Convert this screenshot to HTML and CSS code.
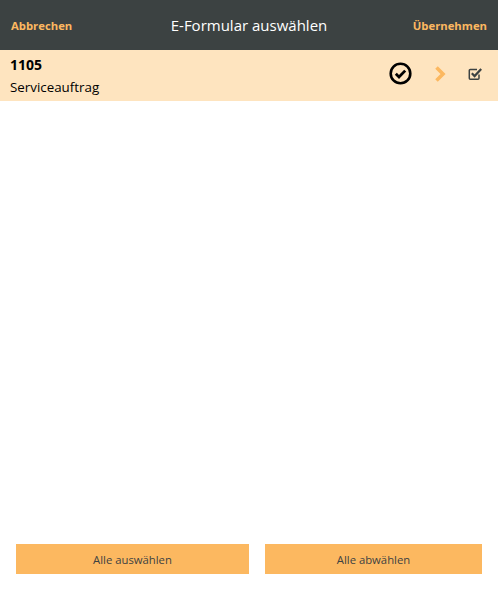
FILE: index.html
```html
<!DOCTYPE html>
<html lang="de">
<head>
  <meta charset="UTF-8">
  <meta name="viewport" content="width=device-width, initial-scale=1.0">
  <title>E-Formular auswählen</title>
  <link rel="stylesheet" href="styles.css">
</head>
<body>
  <div class="app">
    <!-- Header -->
    <header class="topbar">
      <a class="topbar-action">Abbrechen</a>
      <h1 class="topbar-title">E-Formular auswählen</h1>
      <a class="topbar-action topbar-action-right">Übernehmen</a>
    </header>
    <!-- Liste -->
    <main class="list">
      <div class="row">
        <div class="row-text">
          <div class="row-id">1105</div>
          <div class="row-name">Serviceauftrag</div>
        </div>
        <svg class="icon-status" width="23" height="23" viewBox="0 0 23 23">
          <circle cx="11.500" cy="11.500" r="9.800" fill="none" stroke="#000" stroke-width="2.600"/>
          <path d="M6.800 11.800l3.200 3.200 6.200-6.400" fill="none" stroke="#000" stroke-width="2.800"/>
        </svg>
        <svg class="icon-chevron" width="12" height="16" viewBox="0 0 12 16">
          <path d="M2.5 1.5L9 8l-6.500 6.500" fill="none" stroke="#fcb860" stroke-width="3.600"/>
        </svg>
        <svg class="icon-check" width="15" height="14" viewBox="0 0 15 14">
          <path d="M11 7.500v3.700a1 1 0 0 1-1 1H2.300a1 1 0 0 1-1-1V3.500a1 1 0 0 1 1-1H9" fill="none" stroke="#3c4242" stroke-width="1.500"/>
          <path d="M3.800 6.300l2.800 2.800 6.600-7" fill="none" stroke="#3c4242" stroke-width="2.200"/>
        </svg>
      </div>
    </main>
    <!-- Buttons unten -->
    <footer class="actions">
      <button class="btn btn-select">Alle auswählen</button>
      <button class="btn btn-deselect">Alle abwählen</button>
    </footer>
  </div>
</body>
</html>
```

FILE: styles.css
```css
* {
  box-sizing: border-box;
  margin: 0;
  padding: 0;
}
body {
  font-family: 'Open Sans', 'Noto Sans', sans-serif;
  background: #fff;
  color: #000;
}
.app {
  display: flex;
  flex-direction: column;
  height: 100vh;
}
/* Header */
.topbar {
  display: grid;
  grid-template-columns: 1fr auto 1fr;
  align-items: center;
  height: 50px;
  padding: 0 11px;
  background: #3c4242;
  flex-shrink: 0;
}
.topbar-action {
  font-size: 11.300px;
  font-weight: 700;
  color: #fcb860;
}
.topbar-action-right {
  text-align: right;
}
.topbar-title {
  font-size: 15px;
  font-weight: 400;
  color: #fff;
}
/* Liste */
.list {
  flex: 1;
}
.row {
  display: flex;
  align-items: center;
  height: 51px;
  padding: 0 15px 4px 10px;
  background: #fee4bf;
}
.row-text {
  flex: 1;
  padding-top: 5px;
}
.row-id {
  font-size: 14px;
  font-weight: 700;
  line-height: 20px;
  margin-bottom: 2px;
}
.row-name {
  font-size: 13.350px;
  line-height: 20px;
}
.icon-status {
  margin-right: 22px;
}
.icon-chevron {
  margin-right: 22px;
}
/* Buttons unten */
.actions {
  display: flex;
  gap: 16px;
  padding: 0 16px 24px;
  flex-shrink: 0;
}
.btn {
  height: 30px;
  border: 0;
  background: #fcb860;
  color: #3c4242;
  font-family: inherit;
  font-size: 11.300px;
}
.btn-select {
  width: 233px;
}
.btn-deselect {
  width: 217px;
}
```
